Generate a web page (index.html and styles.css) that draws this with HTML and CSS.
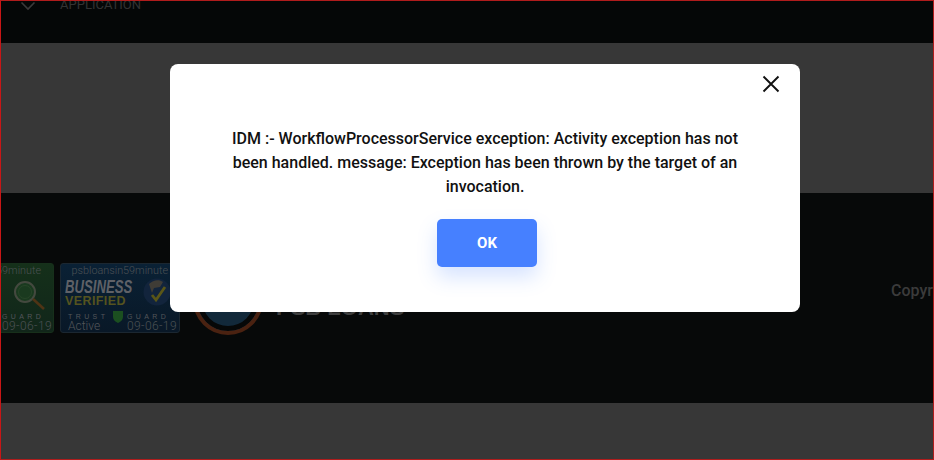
FILE: index.html
```html
<!DOCTYPE html>
<html lang="en">
<head>
<meta charset="utf-8">
<title>PSB Loans</title>
<link rel="stylesheet" href="styles.css">
</head>
<body>
<div class="page">
  <header class="topbar">
    <svg class="chevron" width="16" height="10" viewBox="0 0 16 10"><path d="M1.5 1.5 8 8l6.5-6.5" fill="none" stroke="#3a3a3a" stroke-width="1.6"/></svg>
    <span class="topbar-label">APPLICATION</span>
  </header>
  <section class="hero"></section>
  <footer class="footer">
    <div class="badge badge-green">
      <div class="badge-url">psbloansin59minute</div>
      <svg class="lens" width="36" height="32" viewBox="0 0 36 32"><circle cx="13" cy="12" r="10" fill="#1a3a1f" stroke="#44493f" stroke-width="2"/><circle cx="13" cy="12" r="6.500" fill="none" stroke="#274528"/><path d="M21 19 32 29" stroke="#4f3415" stroke-width="2.600"/></svg>
      <div class="green-foot"><span class="spaced">GUARD</span><span class="date">09-06-19</span></div>
    </div>
    <div class="badge badge-blue">
      <div class="badge-url">psbloansin59minute</div>
      <div class="badge-main">
        <div class="badge-title">
          <div class="business">BUSINESS</div>
          <div class="verified">VERIFIED</div>
        </div>
        <svg class="globe" width="28" height="30" viewBox="0 0 28 30"><circle cx="14" cy="15" r="13.500" fill="#12243c"/><path d="M6 7c4-4 10-5 14-2l-3 5-6 1-2 5z" fill="#3f3c36"/><path d="M9 18l4 5 9-13" fill="none" stroke="#5a5617" stroke-width="2.800"/></svg>
      </div>
      <div class="badge-foot">
        <div class="foot-col"><span class="spaced">TRUST</span><span class="active">Active</span></div>
        <svg class="shield" width="12" height="14" viewBox="0 0 12 14"><path d="M1 1h10v6c0 3-2.500 5-5 6-2.500-1-5-3-5-6z" fill="#1b4f20"/></svg>
        <div class="foot-col"><span class="spaced">GUARD</span><span class="date">09-06-19</span></div>
      </div>
    </div>
    <div class="brand">
      <div class="brand-mark"></div>
      <div class="brand-name">PSB LOANS</div>
    </div>
    <div class="copyright">Copyright</div>
  </footer>
  <section class="bottom"></section>
</div>
<div class="modal">
  <button class="modal-close" type="button" aria-label="Close">
    <svg width="18" height="18" viewBox="0 0 18 18"><path d="M1.500 1.500l15 15M16.500 1.500l-15 15" stroke="#111" stroke-width="1.900" fill="none"/></svg>
  </button>
  <p class="modal-text">IDM :- WorkflowProcessorService exception: Activity exception has not been handled. message: Exception has been thrown by the target of an invocation.</p>
  <button class="modal-ok" type="button">OK</button>
</div>
</body>
</html>
```
FILE: styles.css
```css
* { box-sizing: border-box; }
html, body { margin: 0; height: 100%; }
body { font-family: Roboto, "Liberation Sans", sans-serif; background: #373737; overflow: hidden; }

.page {
  height: 460px;
  display: flex;
  flex-direction: column;
  overflow: hidden;
  border: 1px solid #b01c1c;
  border-left-color: #c81616;
}
.topbar {
  height: 42px;
  flex: none;
  background: #050707;
  display: flex;
  align-items: flex-start;
  padding-left: 19px;
  gap: 24px;
}
.topbar-label {
  font-size: 13px;
  line-height: 7px;
  color: #333;
}
.hero { height: 150px; flex: none; background: #373737; }
.footer {
  height: 210px;
  flex: none;
  background: #070909;
  display: flex;
  align-items: center;
  overflow: hidden;
}
.bottom { flex: 1; background: #373737; }

.badge {
  width: 120px;
  height: 70px;
  flex: none;
  border-radius: 3px;
  border: 1px solid #1b2731;
  display: flex;
  flex-direction: column;
  overflow: hidden;
  font-size: 10px;
  line-height: 10px;
}
.badge-green {
  margin-left: -67px;
  background: linear-gradient(#15301a, #11261a);
  border-color: #17301b;
  align-items: flex-end;
}
.badge-blue {
  margin-left: 6px;
  background: linear-gradient(#0a2135, #091827);
  padding: 0 1px 0 7px;
}
.badge-url {
  margin-top: 1px;
  font-size: 10.800px;
  line-height: 12px;
  text-align: right;
  font-weight: 300;
  white-space: nowrap;
  color: #4c5154;
}
.badge-green .badge-url { margin-right: 12px; }
.badge-blue .badge-url { padding-right: 10px; }
.lens { margin: 3px 5px 0 0; }
.green-foot { width: 51px; display: flex; flex-direction: column; margin-top: 1px; }
.badge-main { display: flex; justify-content: space-between; align-items: flex-start; height: 33px; }
.badge-title { margin-left: -3px; padding-top: 3px; width: 70px; flex: none; }
.business {
  font-family: "Liberation Sans", sans-serif;
  font-weight: 700;
  font-style: italic;
  font-size: 18px;
  line-height: 15px;
  transform: scaleX(.73);
  transform-origin: left center;
  color: #5f6167;
  white-space: nowrap;
}
.verified {
  font-family: "Liberation Sans", sans-serif;
  font-weight: 700;
  font-size: 12.500px;
  line-height: 13px;
  letter-spacing: .4px;
  color: #55531f;
}
.globe { margin-right: 7px; flex: none; }
.badge-foot { display: flex; justify-content: space-between; align-items: flex-start; margin-top: 3px; padding-right: 1px; }
.foot-col { display: flex; flex-direction: column; }
.spaced {
  font-size: 7px;
  line-height: 8px;
  letter-spacing: 3.400px;
  color: #53565a;
  font-family: "Liberation Sans", sans-serif;
  white-space: nowrap;
}
.date {
  font-size: 12px;
  line-height: 11px;
  letter-spacing: .4px;
  font-weight: 300;
  color: #4c5154;
  white-space: nowrap;
}
.active { font-size: 12px; line-height: 11px; font-weight: 300; color: #53565a; }
.shield { margin-top: -3px; }

.brand { display: flex; align-items: center; margin-left: 13px; gap: 13px; flex: none; }
.brand-mark {
  width: 70px;
  height: 70px;
  border-radius: 50%;
  background: #12293a;
  border: 4px solid #4a2211;
  margin-top: 4px;
  box-shadow: inset 0 0 0 5px #060808;
}
.brand-name {
  width: 130px;
  font-family: "Liberation Sans", sans-serif;
  font-weight: 700;
  font-size: 22px;
  line-height: 32px;
  color: #3e3e3e;
  white-space: nowrap;
  margin-top: 20px;
}
.copyright {
  margin-left: 485px;
  margin-bottom: 15px;
  font-size: 16px;
  line-height: 20px;
  font-weight: 500;
  color: #3b3b3b;
  white-space: nowrap;
  flex: none;
}

.modal {
  position: absolute;
  left: 170px;
  top: 64px;
  width: 630px;
  height: 248px;
  background: #fff;
  border-radius: 8px;
  display: flex;
  flex-direction: column;
  align-items: center;
  padding: 63px 50px 0;
}
.modal-close {
  position: absolute;
  top: 11px;
  right: 20px;
  width: 18px;
  height: 18px;
  padding: 0;
  border: 0;
  background: none;
  display: flex;
}
.modal-text {
  margin: 0;
  width: 530px;
  text-align: center;
  font-size: 16px;
  font-weight: 500;
  line-height: 24px;
  color: #111;
}
.modal-ok {
  margin-top: 20px;
  margin-left: 4px;
  width: 100px;
  height: 48px;
  flex: none;
  border: 0;
  border-radius: 5px;
  background: #4680ff;
  color: #fff;
  font-family: Roboto, "Liberation Sans", sans-serif;
  font-size: 15px;
  font-weight: 700;
  box-shadow: 0 10px 20px rgba(70, 128, 255, .22);
}
```
